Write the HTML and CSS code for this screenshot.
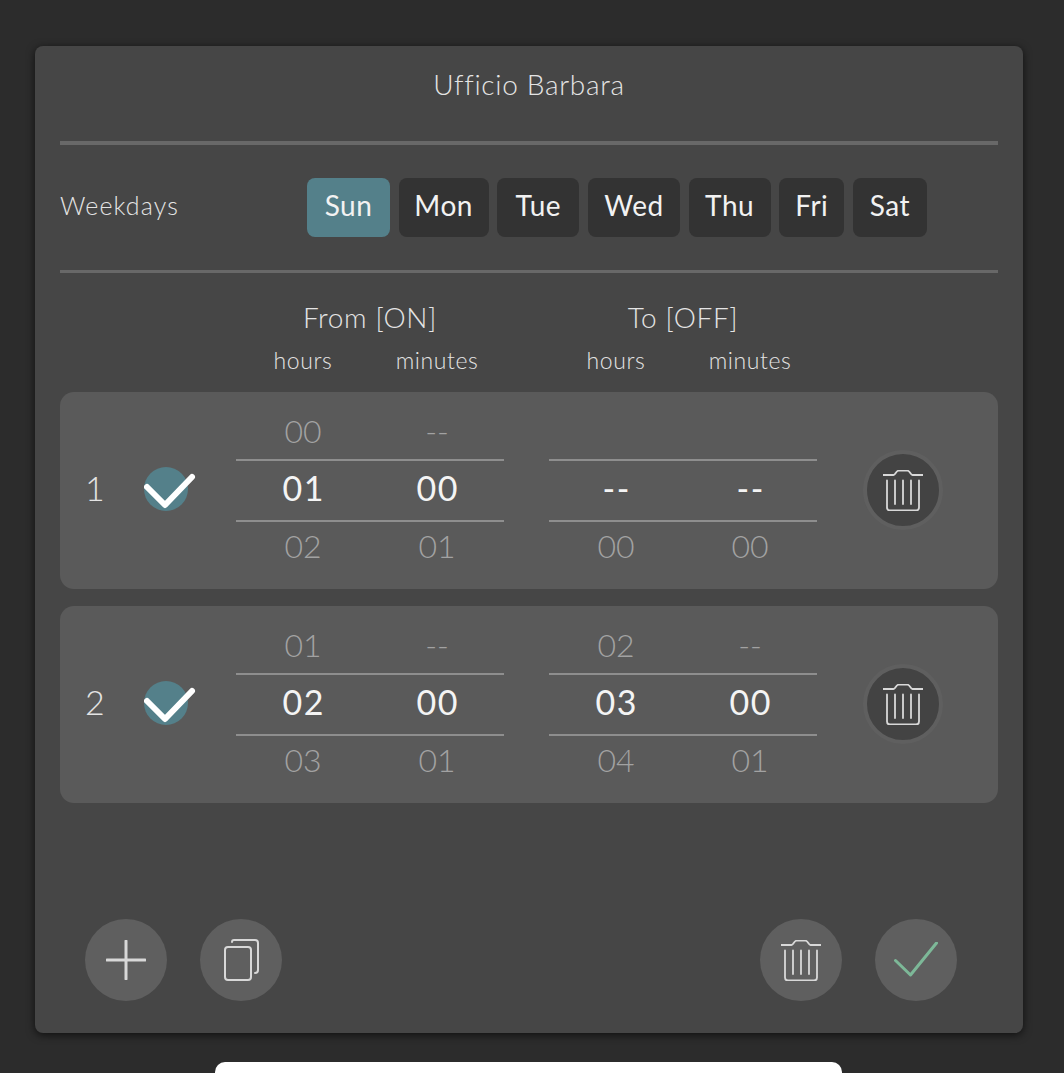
FILE: index.html
```html
<!DOCTYPE html>
<html lang="en">
<head>
    <meta charset="UTF-8">
    <meta name="viewport" content="width=device-width, initial-scale=1.0">
    <title>Ufficio Barbara</title>
    <link rel="stylesheet" href="styles.css">
</head>
<body>
    <svg class="defs" width="0" height="0">
        <symbol id="trash" viewBox="0 0 40 41">
            <path d="M0 5H10.5C12.5 5 13 .7 15.5 .7H24.5C27 .7 27.5 5 29.5 5H40" />
            <path d="M4 10.500V37.500Q4 40.500 7 40.500H33Q36 40.500 36 37.500V10.500" />
            <path d="M12 10.500V34M20 10.500V34M28 10.500V34" />
        </symbol>
        <symbol id="tick" viewBox="0 0 52 44">
            <circle class="tick-bg" cx="22" cy="22" r="22" />
            <path class="tick-mark" d="M3 20L21 38L48 10" />
        </symbol>
    </svg>

    <div class="panel">
        <h1 class="title">Ufficio Barbara</h1>
        <hr class="rule thick">

        <div class="weekdays">
            <span class="weekdays-label">Weekdays</span>
            <div class="days">
                <button class="day active">Sun</button>
                <button class="day">Mon</button>
                <button class="day">Tue</button>
                <button class="day">Wed</button>
                <button class="day">Thu</button>
                <button class="day">Fri</button>
                <button class="day">Sat</button>
            </div>
        </div>
        <hr class="rule">

        <div class="heads">
            <div class="head">
                <div class="head-title">From [ON]</div>
                <div class="head-units"><span>hours</span><span>minutes</span></div>
            </div>
            <div class="head">
                <div class="head-title">To [OFF]</div>
                <div class="head-units"><span>hours</span><span>minutes</span></div>
            </div>
        </div>

        <div class="slot">
            <div class="slot-num">1</div>
            <svg class="tick"><use href="#tick" /></svg>
            <div class="picker">
                <div class="wheel"><div>00</div><div class="cur">01</div><div>02</div><div>03</div></div>
                <div class="wheel"><div class="dash">--</div><div class="cur">00</div><div>01</div><div>02</div></div>
            </div>
            <div class="picker">
                <div class="wheel"><div></div><div class="cur">--</div><div>00</div><div>01</div></div>
                <div class="wheel"><div></div><div class="cur">--</div><div>00</div><div>01</div></div>
            </div>
            <button class="slot-del"><svg class="trash-icon"><use href="#trash" /></svg></button>
        </div>

        <div class="slot">
            <div class="slot-num">2</div>
            <svg class="tick"><use href="#tick" /></svg>
            <div class="picker">
                <div class="wheel"><div>01</div><div class="cur">02</div><div>03</div><div>04</div></div>
                <div class="wheel"><div class="dash">--</div><div class="cur">00</div><div>01</div><div>02</div></div>
            </div>
            <div class="picker">
                <div class="wheel"><div>02</div><div class="cur">03</div><div>04</div><div>05</div></div>
                <div class="wheel"><div class="dash">--</div><div class="cur">00</div><div>01</div><div>02</div></div>
            </div>
            <button class="slot-del"><svg class="trash-icon"><use href="#trash" /></svg></button>
        </div>

        <div class="actions">
            <div class="action-group">
                <button class="action">
                    <svg width="40" height="40" viewBox="0 0 40 40"><path d="M1 20H39M20 1V39" /></svg>
                </button>
                <button class="action">
                    <svg class="thin" width="40" height="42" viewBox="0 0 40 42"><rect x="4" y="8" width="26" height="33" rx="3" /><path d="M11 3Q11 1 13 1H34Q37 1 37 4V31Q37 34 34 34" /></svg>
                </button>
            </div>
            <div class="action-group">
                <button class="action"><svg class="trash-icon"><use href="#trash" /></svg></button>
                <button class="action">
                    <svg class="green" width="44" height="36" viewBox="0 0 44 36"><path d="M1.500 18.500L16.500 33L42.500 1" /></svg>
                </button>
            </div>
        </div>
    </div>

    <div class="home-bar"></div>
</body>
</html>
```

FILE: styles.css
```css
body{
    margin: 0;
    height: 1073px;
    overflow: hidden;
    background-color: #2c2c2c;
    color: #e4e4e4;
    font-family: Lato, 'Open Sans', sans-serif;
    font-weight: 300;
}
button{
    font-family: inherit;
    font-weight: inherit;
    border: 0;
    padding: 0;
}
svg{
    fill: none;
    stroke: #d8d8d8;
    stroke-width: 3;
    stroke-linecap: round;
    stroke-linejoin: round;
}
.defs{
    position: absolute;
}
#trash path{
    stroke-width: 1.8;
}
.panel{
    box-sizing: border-box;
    display: flex;
    flex-direction: column;
    width: 988px;
    height: 987px;
    margin: 46px 0 0 35px;
    padding: 21px 25px 32px 25px;
    background-color: #464646;
    border-radius: 8px;
    box-shadow: 0 2px 8px rgba(0, 0, 0, 0.65);
}
.title{
    margin: 0 0 40px;
    font-size: 28px;
    font-weight: 300;
    line-height: 34px;
    letter-spacing: 0.7px;
    text-align: center;
}
.rule{
    width: 100%;
    height: 3px;
    margin: 0;
    border: 0;
    background-color: #686868;
}
.thick{
    height: 4px;
}
.weekdays{
    display: flex;
    align-items: center;
    padding: 33px 0;
}
.weekdays-label{
    width: 247px;
    margin-top: -5px;
    font-size: 25px;
    letter-spacing: 1.1px;
}
.days{
    display: grid;
    grid-template-columns: 83px 90px 82px 92px 82px 65px 74px;
    gap: 8.67px;
}
.day{
    height: 59px;
    padding-bottom: 6px;
    background-color: #333333;
    border-radius: 8px;
    color: #f2f2f2;
    font-size: 28px;
    font-weight: 400;
    letter-spacing: 0.5px;
}
.day.active{
    background-color: #54808a;
}
.heads{
    display: flex;
    gap: 45px;
    height: 119px;
    padding: 27px 0 0 176px;
    box-sizing: border-box;
}
.head{
    width: 268px;
    text-align: center;
}
.head-title{
    font-size: 28px;
    line-height: 34px;
    letter-spacing: 0.6px;
}
.head-units{
    display: flex;
    margin-top: 12px;
    font-size: 23px;
    line-height: 28px;
    letter-spacing: 0.6px;
}
.head-units span{
    width: 50%;
}
.slot{
    display: flex;
    align-items: flex-start;
    height: 197px;
    margin-bottom: 17px;
    padding-left: 25px;
    background-color: #5a5a5a;
    border-radius: 14px;
    overflow: hidden;
}
.slot-num{
    width: 59px;
    margin-top: 75px;
    font-size: 34px;
    line-height: 42px;
}
.tick{
    width: 52px;
    height: 44px;
    margin: 75px 40px 0 0;
}
.tick-bg{
    fill: #54808a;
    stroke: none;
}
.tick-mark{
    stroke: #ffffff;
    stroke-width: 6;
}
.picker{
    position: relative;
    display: flex;
    width: 268px;
    margin-right: 45px;
    padding-top: 10px;
}
.picker::before,
.picker::after{
    content: "";
    position: absolute;
    left: 0;
    right: 0;
    height: 2px;
    background-color: #8e8e8e;
}
.picker::before{
    top: 67px;
}
.picker::after{
    top: 128px;
}
.wheel{
    width: 50%;
    color: #a2a2a2;
    font-size: 32px;
    text-align: center;
}
.wheel div{
    height: 57px;
    line-height: 57px;
}
.wheel div:last-child{
    margin-top: -4px;
}
.wheel .cur{
    height: 58px;
    padding-left: 1.5px;
    line-height: 58px;
    color: #f4f4f4;
    font-size: 34px;
    font-weight: 400;
    letter-spacing: 1.5px;
}
.slot-del{
    box-sizing: border-box;
    flex: none;
    width: 80px;
    height: 80px;
    margin: 58px 0 0 1px;
    background-color: #434343;
    border: 4px solid #5f5f5f;
    border-radius: 50%;
    display: flex;
    align-items: center;
    justify-content: center;
}
.trash-icon{
    width: 40px;
    height: 41px;
}
.actions{
    display: flex;
    justify-content: space-between;
    margin-top: auto;
    padding: 0 41px 0 25px;
}
.action-group{
    display: flex;
    gap: 33px;
}
.action{
    display: flex;
    align-items: center;
    justify-content: center;
    width: 82px;
    height: 82px;
    background-color: #5f5f5f;
    border-radius: 50%;
}
.thin{
    stroke-width: 2;
}
.green{
    stroke: #7db898;
}
.home-bar{
    width: 627px;
    height: 30px;
    margin: 29px 0 0 215px;
    background-color: #ffffff;
    border-radius: 10px;
}
```
